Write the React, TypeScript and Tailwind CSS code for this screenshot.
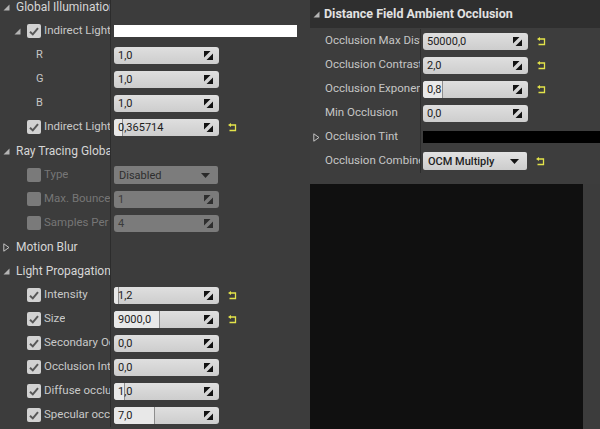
import React from 'react';

type Row =
  | { kind: 'header'; label: string; open: boolean }
  | { kind: 'prop'; label: string; indent: number; check?: 'on' | 'off' | 'none'; arrow?: boolean; value?: React.ReactNode; dim?: boolean };

function Spin({ dim }: { dim?: boolean }) {
  return (
    <svg width="9" height="9" viewBox="0 0 9 9">
      <path d="M0 0H6.5L0 6.5Z M9 9H2.5L9 2.5Z" fill={dim ? '#2e2e2e' : '#121212'} />
    </svg>
  );
}

function Reset() {
  return (
    <svg width="9" height="9" viewBox="0 0 9 9" className="shrink-0">
      <path d="M2.5 2H7.5V7.5H1.5" fill="none" stroke="#e3e34a" strokeWidth="1.3" />
      <path d="M0 2L3 0V4Z" fill="#e3e34a" />
    </svg>
  );
}

function Caret({ dim }: { dim?: boolean }) {
  return (
    <svg width="9" height="5" viewBox="0 0 9 5">
      <path d="M0 0H9L4.5 5Z" fill={dim ? '#2a2a2a' : '#141414'} />
    </svg>
  );
}

function Check({ on, dim }: { on: boolean; dim?: boolean }) {
  return (
    <div className={`flex h-[14px] w-[14px] shrink-0 items-center justify-center rounded-[2px] ${dim ? 'bg-[#7a7a7a]' : 'bg-[#d2d2d2]'}`}>
      {on && (
        <svg width="10" height="9" viewBox="0 0 10 9">
          <path d="M1 4.8L3.8 7.4L9 1.2" fill="none" stroke="#575757" strokeWidth="2" />
        </svg>
      )}
    </div>
  );
}

function Expander({ open }: { open: boolean }) {
  return open ? (
    <svg width="7" height="7" viewBox="0 0 7 7" className="shrink-0">
      <path d="M6.5 0.5V6.5H0.5Z" fill="#b4b4b4" />
    </svg>
  ) : (
    <svg width="7" height="9" viewBox="0 0 7 9" className="shrink-0">
      <path d="M0.8 0.8L6 4.5L0.8 8.2Z" fill="none" stroke="#c4c4c4" strokeWidth="1" />
    </svg>
  );
}

function NumberBox({ value, fill, dim, reset }: { value: string; fill?: number; dim?: boolean; reset?: boolean }) {
  return (
    <div className="flex items-center">
      <div
        className={`relative flex h-[17px] w-[105px] items-center justify-between overflow-hidden rounded-[3px] pl-[4px] pr-[6px] ${
          dim ? 'bg-[#7b7b7b] text-[#3b3b3b]' : 'bg-gradient-to-b from-[#dfdfdf] to-[#cdcdcd] text-[#1c1c1c]'
        }`}
      >
        {fill !== undefined && (
          <div className="absolute left-0 top-0 h-full border-r border-[#8e8e8e] bg-[#e8e8e8]" style={{ width: fill }} />
        )}
        <span className="relative text-[11px] leading-none">{value}</span>
        <span className="relative flex">
          <Spin dim={dim} />
        </span>
      </div>
      {reset && (
        <span className="ml-[9px] flex">
          <Reset />
        </span>
      )}
    </div>
  );
}

function Dropdown({ value, dim, reset, bold }: { value: string; dim?: boolean; reset?: boolean; bold?: boolean }) {
  return (
    <div className="flex items-center">
      <div
        className={`flex h-[18px] w-[104px] items-center justify-between rounded-[2px] pl-[5px] pr-[8px] ${
          dim ? 'bg-[#7c7c7c] text-[#2e2e2e]' : 'bg-gradient-to-b from-[#e2e2e2] to-[#cccccc] text-[#1e1e1e]'
        }`}
      >
        <span className={`text-[11px] leading-none ${bold ? 'font-medium' : ''}`}>{value}</span>
        <Caret dim={dim} />
      </div>
      {reset && (
        <span className="ml-[9px] flex">
          <Reset />
        </span>
      )}
    </div>
  );
}

const leftRows: Row[] = [
  { kind: 'header', label: 'Global Illumination', open: true },
  { kind: 'prop', label: 'Indirect Lighting Color', indent: 1, check: 'on', arrow: true, value: <div className="h-[12px] w-[183px] bg-white" /> },
  { kind: 'prop', label: 'R', indent: 2, value: <NumberBox value="1,0" /> },
  { kind: 'prop', label: 'G', indent: 2, value: <NumberBox value="1,0" /> },
  { kind: 'prop', label: 'B', indent: 2, value: <NumberBox value="1,0" /> },
  { kind: 'prop', label: 'Indirect Lighting Intensity', indent: 1, check: 'on', value: <NumberBox value="0,365714" fill={9} reset /> },
  { kind: 'header', label: 'Ray Tracing Global Illumination', open: true },
  { kind: 'prop', label: 'Type', indent: 1, check: 'off', dim: true, value: <Dropdown value="Disabled" dim /> },
  { kind: 'prop', label: 'Max. Bounces', indent: 1, check: 'off', dim: true, value: <NumberBox value="1" dim /> },
  { kind: 'prop', label: 'Samples Per Pixel', indent: 1, check: 'off', dim: true, value: <NumberBox value="4" dim /> },
  { kind: 'header', label: 'Motion Blur', open: false },
  { kind: 'header', label: 'Light Propagation Volume', open: true },
  { kind: 'prop', label: 'Intensity', indent: 1, check: 'on', value: <NumberBox value="1,2" fill={5} reset /> },
  { kind: 'prop', label: 'Size', indent: 1, check: 'on', value: <NumberBox value="9000,0" fill={46} reset /> },
  { kind: 'prop', label: 'Secondary Occlusion', indent: 1, check: 'on', value: <NumberBox value="0,0" /> },
  { kind: 'prop', label: 'Occlusion Intensity', indent: 1, check: 'on', value: <NumberBox value="0,0" /> },
  { kind: 'prop', label: 'Diffuse occlusion exponent', indent: 1, check: 'on', value: <NumberBox value="1,0" fill={11} /> },
  { kind: 'prop', label: 'Specular occlusion exponent', indent: 1, check: 'on', value: <NumberBox value="7,0" fill={41} /> },
];

function LeftRow({ row }: { row: Row }) {
  if (row.kind === 'header') {
    return (
      <div className="flex h-6 shrink-0">
        <div className="flex w-[111px] items-center overflow-hidden whitespace-nowrap border-r border-[#2c2c2c] pl-[3px]">
          <Expander open={row.open} />
          <span className="ml-[6px] min-w-0 overflow-hidden text-[12px] text-[#d6d6d6]">{row.label}</span>
        </div>
      </div>
    );
  }
  return (
    <div className="flex h-6 shrink-0">
      <div className="flex w-[111px] shrink-0 items-center overflow-hidden whitespace-nowrap border-r border-[#2c2c2c]">
        {row.indent === 2 ? (
          <span className="pl-[36px] text-[11px] text-[#c6c6c6]">{row.label}</span>
        ) : (
          <>
            <span className="flex w-[27px] shrink-0 justify-end pr-[6px]">{row.arrow && <Expander open />}</span>
            {row.check !== 'none' && row.check !== undefined && <Check on={row.check === 'on'} dim={row.dim} />}
            <span className={`ml-[3px] min-w-0 overflow-hidden text-[11.5px] ${row.dim ? 'text-[#767676]' : 'text-[#c9c9c9]'}`}>
              {row.label}
            </span>
          </>
        )}
      </div>
      <div className="flex items-center pl-[3px]">{row.value}</div>
    </div>
  );
}

const rightRows: { label: string; value: React.ReactNode; arrow?: boolean }[] = [
  { label: 'Occlusion Max Distance', value: <NumberBox value="50000,0" reset /> },
  { label: 'Occlusion Contrast', value: <NumberBox value="2,0" reset /> },
  { label: 'Occlusion Exponent', value: <NumberBox value="0,8" fill={20} reset /> },
  { label: 'Min Occlusion', value: <NumberBox value="0,0" /> },
  { label: 'Occlusion Tint', arrow: true, value: <div className="h-[12px] w-[177px] bg-black" /> },
  { label: 'Occlusion Combine Mode', value: <Dropdown value="OCM Multiply" bold reset /> },
];

export default function App() {
  return (
    <div className="flex h-[429px] w-[600px] overflow-hidden bg-[#3c3c3c] font-[Roboto,sans-serif]">
      <div className="w-[310px] shrink-0 overflow-hidden bg-[#3c3c3c]">
        <div className="-mt-[5px] flex flex-col">
          {leftRows.map((r, i) => (
            <LeftRow key={i} row={r} />
          ))}
        </div>
      </div>

      <div className="flex flex-1 flex-col">
        <div className="bg-[#3d3d3d] pb-[11px]">
          <div className="flex h-[28px] items-center bg-[#2f2f2f] pl-[3px]">
            <Expander open />
            <span className="ml-[4px] text-[12.5px] font-bold text-[#e2e2e2]">Distance Field Ambient Occlusion</span>
          </div>
          <div className="flex flex-col pt-px">
            {rightRows.map((r) => (
              <div key={r.label} className="flex h-6">
                <div className="flex w-[111px] shrink-0 items-center overflow-hidden whitespace-nowrap border-r border-[#2c2c2c]">
                  <span className="flex w-[15px] shrink-0 justify-start pl-[3px]">{r.arrow && <Expander open={false} />}</span>
                  <span className="min-w-0 overflow-hidden text-[11.5px] text-[#c6c6c6]">{r.label}</span>
                </div>
                <div className="flex items-center overflow-hidden pl-[2px]">{r.value}</div>
              </div>
            ))}
          </div>
        </div>
        <div className="flex flex-1">
          <div className="w-[273px] bg-[#101010]" />
          <div className="flex-1 bg-[#3c3c3c]" />
        </div>
      </div>
    </div>
  );
}
